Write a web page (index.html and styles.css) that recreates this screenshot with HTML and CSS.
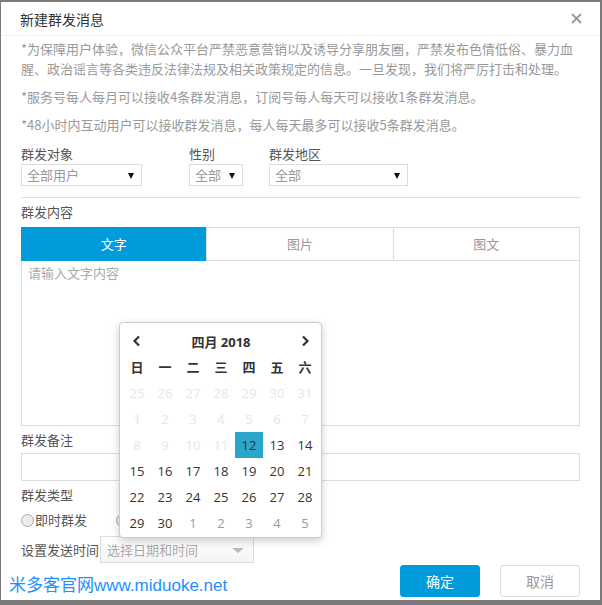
FILE: index.html
```html
<!DOCTYPE html>
<html lang="zh-CN">
<head>
    <meta charset="UTF-8">
    <title>新建群发消息</title>
    <link rel="stylesheet" href="styles.css">
</head>
<body>
    <div id="dialog">
        <div class="dialog-header">
            <span class="dialog-title">新建群发消息</span>
            <span class="dialog-close">
                <svg width="11" height="11" viewBox="0 0 11 11"><path d="M1 1 L10 10 M10 1 L1 10" stroke="#999" stroke-width="1.8"/></svg>
            </span>
        </div>
        <div class="dialog-body">
            <p class="note">*为保障用户体验，微信公众平台严禁恶意营销以及诱导分享朋友圈，严禁发布色情低俗、暴力血腥、政治谣言等各类违反法律法规及相关政策规定的信息。一旦发现，我们将严厉打击和处理。</p>
            <p class="note">*服务号每人每月可以接收4条群发消息，订阅号每人每天可以接收1条群发消息。</p>
            <p class="note">*48小时内互动用户可以接收群发消息，每人每天最多可以接收5条群发消息。</p>

            <div class="filters">
                <div class="field">
                    <div class="label">群发对象</div>
                    <div class="select w-target">全部用户<span class="caret"></span></div>
                </div>
                <div class="field">
                    <div class="label">性别</div>
                    <div class="select w-sex">全部<span class="caret"></span></div>
                </div>
                <div class="field">
                    <div class="label">群发地区</div>
                    <div class="select w-area">全部<span class="caret"></span></div>
                </div>
            </div>

            <div class="label label-content">群发内容</div>
            <div class="tabs">
                <div class="tab active">文字</div>
                <div class="tab">图片</div>
                <div class="tab">图文</div>
            </div>
            <div class="textarea">请输入文字内容</div>

            <div class="label">群发备注</div>
            <div class="input"></div>

            <div class="label">群发类型</div>
            <div class="radios">
                <label class="radio"><span class="dot"></span>即时群发</label>
                <label class="radio"><span class="dot checked"></span>定时</label>
            </div>

            <div class="time-row">
                <span class="time-label">设置发送时间</span>
                <div class="date-input">选择日期和时间<span class="caret grey"></span></div>
            </div>
        </div>
        <div class="dialog-footer">
            <a class="site-link" href="#">米多客官网www.miduoke.net</a>
            <div class="buttons">
                <div class="btn btn-primary">确定</div>
                <div class="btn">取消</div>
            </div>
        </div>

        <div id="datepicker">
            <div class="dp-head">
                <span class="dp-nav">
                    <svg width="10" height="12" viewBox="0 0 10 12"><path d="M7 1.5 L2.5 6 L7 10.5" fill="none" stroke="#333" stroke-width="2.2"/></svg>
                </span>
                <span class="dp-title">四月 2018</span>
                <span class="dp-nav">
                    <svg width="10" height="12" viewBox="0 0 10 12"><path d="M3 1.5 L7.5 6 L3 10.5" fill="none" stroke="#333" stroke-width="2.2"/></svg>
                </span>
            </div>
            <div class="dp-grid" id="dp-grid"></div>
        </div>
    </div>

    <script>
        // Build the April 2018 calendar
        let grid = document.getElementById("dp-grid");
        let weekdays = ["日", "一", "二", "三", "四", "五", "六"];
        let html = "";
        for (let i = 0; i < weekdays.length; i++) {
            html += '<div class="dp-cell dp-week">' + weekdays[i] + '</div>';
        }
        for (let d = 25; d <= 31; d++) {
            html += '<div class="dp-cell old">' + d + '</div>';
        }
        for (let d = 1; d <= 11; d++) {
            html += '<div class="dp-cell old">' + d + '</div>';
        }
        for (let d = 12; d <= 30; d++) {
            let cls = d === 12 ? "dp-cell today" : "dp-cell";
            html += '<div class="' + cls + '">' + d + '</div>';
        }
        for (let d = 1; d <= 5; d++) {
            html += '<div class="dp-cell new">' + d + '</div>';
        }
        grid.innerHTML = html;
    </script>
</body>
</html>
```

FILE: styles.css
```css
/* Dialog Styles */
body {
    margin: 0;
    background-color: #7b7b7b;
    font-family: "Noto Sans CJK SC", "Open Sans", sans-serif;
    font-size: 13px;
    color: #555;
}

#dialog {
    position: relative;
    margin: 2px 2px 0 1px;
    height: 598px;
    background-color: #fff;
    box-sizing: border-box;
}

.dialog-header {
    height: 33px;
    display: flex;
    align-items: center;
    justify-content: space-between;
    padding: 0 18px 0 19px;
    border-bottom: 1px solid #f2f2f8;
}

.dialog-title {
    font-size: 14px;
    color: #333;
}

.dialog-close {
    display: flex;
}

.dialog-body {
    padding: 3px 20px 0 20px;
}

.note {
    margin: 0 0 8px 0;
    line-height: 20px;
    color: #999;
}

.filters {
    display: flex;
    gap: 47px;
    margin-top: 9px;
    padding-bottom: 11px;
    border-bottom: 1px solid #ddd;
}

.filters .field:nth-child(2) {
    margin-right: -21px;
}

.label {
    line-height: 20px;
    color: #555;
}

.select {
    position: relative;
    height: 20px;
    line-height: 20px;
    border: 1px solid #ddd;
    padding-left: 5px;
    color: #999;
}

.w-target { width: 114px; }
.w-sex { width: 47px; }
.w-area { width: 132px; }

.caret {
    position: absolute;
    right: 7px;
    top: 8px;
    width: 0;
    height: 0;
    border-left: 3px solid transparent;
    border-right: 3px solid transparent;
    border-top: 6px solid #111;
}

.caret.grey {
    top: 11px;
    right: 9px;
    border-left-width: 6px;
    border-right-width: 6px;
    border-top-width: 5px;
    border-top-color: #bbb;
}

.label-content {
    margin-top: 4px;
}

.tabs {
    display: flex;
    margin-top: 5px;
    border: 1px solid #ddd;
    height: 32px;
}

.tab {
    flex: 1;
    text-align: center;
    line-height: 32px;
    color: #999;
    font-size: 13px;
    border-left: 1px solid #ddd;
}

.tab:first-child {
    border-left: none;
}

.tab.active {
    background-color: #009bdb;
    color: #fff;
    margin: -1px 0 -1px -1px;
    line-height: 34px;
}

.textarea {
    height: 160px;
    border: 1px solid #ddd;
    border-top: none;
    padding: 2px 6px;
    color: #aaa;
    line-height: 20px;
}

.textarea + .label {
    margin-top: 4px;
}

.input {
    height: 26px;
    border: 1px solid #ddd;
    margin-top: 3px;
    margin-bottom: 4px;
}

.radios {
    display: flex;
    gap: 29px;
    margin-top: 4px;
    line-height: 22px;
}

.radio {
    display: flex;
    align-items: center;
    color: #555;
}

.dot {
    display: inline-block;
    width: 11px;
    height: 11px;
    border-radius: 50%;
    border: 1px solid #aaa;
    background-color: #ececec;
    margin-right: 1px;
}

.time-row {
    display: flex;
    align-items: center;
    margin-top: 5px;
}

.time-label {
    width: 79px;
    color: #555;
}

.date-input {
    position: relative;
    width: 146px;
    height: 25px;
    line-height: 25px;
    padding-left: 6px;
    border: 1px solid #ddd;
    color: #aaa;
    background: linear-gradient(#fff, #f4f4f4);
}

.dialog-footer {
    display: flex;
    justify-content: space-between;
    align-items: flex-start;
    padding: 2px 20px 0 8px;
}

.site-link {
    margin-top: 6px;
    font-family: "Liberation Sans", "Noto Sans CJK SC", sans-serif;
    font-size: 17px;
    color: #1e90ff;
    text-decoration: none;
}

.buttons {
    display: flex;
    gap: 20px;
}

.btn {
    width: 78px;
    height: 30px;
    line-height: 30px;
    text-align: center;
    border: 1px solid #ddd;
    border-radius: 3px;
    color: #999;
    font-size: 14px;
}

.btn-primary {
    background-color: #009bdb;
    border-color: #009bdb;
    color: #fff;
}

/* Date picker popup */
#datepicker {
    position: absolute;
    left: 118px;
    top: 320px;
    width: 198px;
    height: 209px;
    padding: 5px 0 0 3px;
    border: 1px solid #ccc;
    border-radius: 4px;
    background-color: #fff;
    box-shadow: 0 3px 8px rgba(0, 0, 0, 0.2);
    font-family: "Open Sans", "Noto Sans CJK SC", sans-serif;
}

.dp-head {
    display: flex;
    justify-content: space-between;
    align-items: center;
    width: 196px;
    height: 26px;
}

.dp-nav {
    width: 28px;
    height: 26px;
    display: flex;
    align-items: center;
    justify-content: center;
}

.dp-title {
    font-weight: bold;
    color: #333;
    font-size: 13px;
}

.dp-grid {
    display: grid;
    grid-template-columns: repeat(7, 28px);
    grid-auto-rows: 26px;
}

.dp-cell {
    text-align: center;
    line-height: 26px;
    color: #333;
    font-size: 13px;
}

.dp-week {
    font-weight: bold;
    font-family: "Noto Sans CJK SC", sans-serif;
}

.dp-cell.old {
    color: #e6e6e6;
}

.dp-cell.new {
    color: #999;
}

.dp-cell.today {
    background-color: #2ba6cb;
}
```
